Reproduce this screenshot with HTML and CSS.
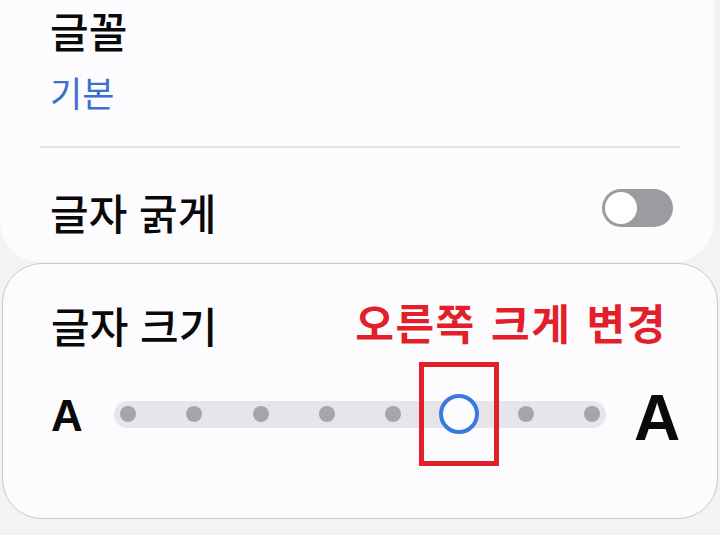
FILE: index.html
```html
<!DOCTYPE html>
<html lang="ko">
<head>
<meta charset="utf-8">
<link rel="stylesheet" href="styles.css">
</head>
<body>
<div class="card top">
  <div class="item font">
    <div class="title">글꼴</div>
    <div class="sub">기본</div>
  </div>
  <div class="divider"></div>
  <div class="item row bold">
    <div class="title">글자 굵게</div>
    <div class="toggle"><span class="knob"></span></div>
  </div>
</div>
<div class="card size">
  <div class="size-head">
    <div class="title">글자 크기</div>
    <div class="note">오른쪽 크게 변경</div>
  </div>
  <div class="slider-row">
    <span class="a-small">A</span>
    <div class="track">
      <span class="dot"></span>
      <span class="dot"></span>
      <span class="dot"></span>
      <span class="dot"></span>
      <span class="dot"></span>
      <span class="thumb-wrap"><span class="thumb"></span><span class="mark"></span></span>
      <span class="dot"></span>
      <span class="dot"></span>
    </div>
    <span class="a-big">A</span>
  </div>
</div>
</body>
</html>
```
FILE: styles.css
```css
html, body {
  margin: 0;
  padding: 0;
}
body {
  width: 720px;
  height: 535px;
  overflow: hidden;
  background: #f3f3f5;
  font-family: "Noto Sans CJK KR", "Noto Sans", sans-serif;
  color: #0a0a0a;
}
.card {
  background: #fcfcfe;
}
.top {
  width: 714px;
  height: 262px;
  border-radius: 0 0 40px 40px;
  padding-top: 4px;
  box-sizing: border-box;
}
.item {
  padding-left: 50px;
}
.title {
  font-size: 42px;
  font-weight: 500;
  line-height: 52px;
}
.sub {
  font-size: 35px;
  line-height: 40px;
  color: #3a6fd0;
  margin-top: 16px;
}
.divider {
  height: 2px;
  background: #e4e4e6;
  margin: 34px 34px 0 40px;
}
.row {
  display: flex;
  align-items: center;
  justify-content: space-between;
  padding-right: 41px;
  margin-top: 38px;
}
.toggle {
  width: 71px;
  height: 38px;
  border-radius: 19px;
  background: #9c9ca0;
  display: flex;
  align-items: center;
  padding-left: 3px;
  box-sizing: border-box;
  margin-top: -8px;
}
.knob {
  width: 32px;
  height: 32px;
  border-radius: 50%;
  background: #fff;
}
.size {
  margin: 1px 0 0 2px;
  width: 716px;
  height: 256px;
  box-sizing: border-box;
  border: 1px solid #c9c9cb;
  border-radius: 40px;
  padding: 35px 0 0 48px;
}
.size-head {
  display: flex;
  align-items: center;
}
.note {
  font-size: 42px;
  font-weight: 700;
  color: #e21f2b;
  margin-left: 138px;
  letter-spacing: 1.5px;
  word-spacing: 2px;
  line-height: 52px;
  margin-top: -7px;
  white-space: nowrap;
}
.slider-row {
  display: flex;
  align-items: center;
  margin-top: 27px;
}
.a-small {
  font-family: "Liberation Sans", Arial, sans-serif;
  font-weight: 700;
  font-size: 44px;
  width: 63px;
  line-height: 1;
  margin-top: 4px;
}
.track {
  width: 492px;
  height: 27px;
  border-radius: 14px;
  background: #e6e6ea;
  display: flex;
  align-items: center;
  justify-content: space-between;
  padding: 0 6px;
  box-sizing: border-box;
}
.dot {
  width: 16px;
  height: 16px;
  border-radius: 50%;
  background: #a6a6a9;
}
.thumb-wrap {
  position: relative;
  width: 16px;
  height: 16px;
  display: flex;
  align-items: center;
  justify-content: center;
}
.thumb {
  position: absolute;
  width: 40px;
  height: 40px;
  box-sizing: border-box;
  border: 4px solid #3b79e1;
  border-radius: 50%;
  background: #fcfcfe;
}
.mark {
  position: absolute;
  width: 80px;
  height: 104px;
  box-sizing: border-box;
  border: 5px solid #e21f2b;
}
.a-big {
  font-family: "Liberation Sans", Arial, sans-serif;
  font-weight: 700;
  font-size: 64px;
  line-height: 1;
  margin-left: 28px;
  margin-top: 8px;
}
```
